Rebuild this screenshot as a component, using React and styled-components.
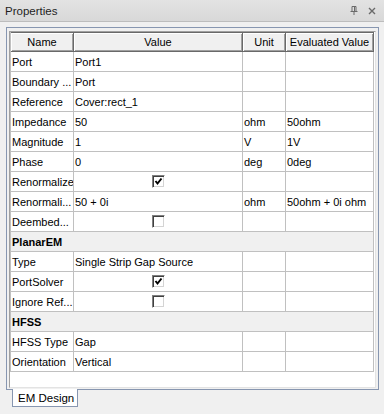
import React from "react";
import styled, { createGlobalStyle } from "styled-components";

const Global = createGlobalStyle`
  html, body { margin: 0; padding: 0; background: #f0f0f0; }
  body { font-family: "Liberation Sans", Arial, sans-serif; }
  * { box-sizing: border-box; }
`;

const Root = styled.div`
  width: 384px;
  height: 414px;
  background: #f0f0f0;
  display: flex;
  flex-direction: column;
  overflow: hidden;
`;

const TitleBar = styled.div`
  height: 22px;
  display: flex;
  align-items: center;
  padding: 0 8px 0 5px;
  background: linear-gradient(#e3e3e3, #d8d8d8);
  border-bottom: 1px solid #bdbdbd;
`;

const Title = styled.div`
  flex: 1;
  font-size: 11.5px;
  color: #1e1e1e;
`;

const TitleButtons = styled.div`
  display: flex;
  align-items: center;
  gap: 10px;
`;

const Body = styled.div`
  padding: 5px 5px 0 6px;
`;

const Frame = styled.div`
  border: 1px solid #8796b0;
  padding: 3px 2px 1px 2px;
  background: #f0f0f0;
`;

const Panel = styled.div`
  height: 357px;
  background: #fff;
  border-left: 1px solid #a0a0a0;
  border-top: 1px solid #a0a0a0;
  border-right: 1px solid #e3e3e3;
  border-bottom: 1px solid #e3e3e3;
`;

const Grid = styled.div`
  width: 364px;
  display: grid;
  grid-template-columns: 63px 169px 43px 88px;
  grid-auto-rows: 20px;
  border-left: 1px solid #c0c0c0;
  font-size: 11px;
  color: #000;
`;

const HeaderCell = styled.div`
  background: #f0f0f0;
  border-top: 1px solid #696969;
  border-right: 1px solid #696969;
  border-bottom: 1px solid #696969;
  box-shadow: inset 1px 1px #fff, inset -1px -1px #a0a0a0;
  display: flex;
  align-items: center;
  justify-content: center;
  white-space: nowrap;
`;

const Cell = styled.div`
  border-right: 1px solid #c0c0c0;
  border-bottom: 1px solid #c0c0c0;
  display: flex;
  align-items: center;
  justify-content: ${(p) => (p.$center ? "center" : "flex-start")};
  padding-left: ${(p) => (p.$center ? "0" : "1px")};
  white-space: nowrap;
  overflow: hidden;
`;

const GroupCell = styled.div`
  grid-column: 1 / -1;
  background: #f0f0f0;
  border-right: 1px solid #c0c0c0;
  border-bottom: 1px solid #c0c0c0;
  display: flex;
  align-items: center;
  padding-left: 1px;
  font-weight: bold;
`;

const Box = styled.div`
  width: 13px;
  height: 13px;
  background: #fff;
  border: 1px solid;
  border-color: #808080 #fff #fff #808080;
  box-shadow: inset 1px 1px #404040, inset -1px -1px #d4d4d4;
  display: flex;
  align-items: center;
  justify-content: center;
`;

const TabStrip = styled.div`
  display: flex;
  padding-left: 6px;
`;

const Tab = styled.div`
  margin-top: -1px;
  width: 66px;
  height: 18px;
  background: #fff;
  border: 1px solid #8796b0;
  border-top: none;
  font-size: 11.5px;
  color: #000;
  display: flex;
  align-items: center;
  padding-left: 5px;
`;

const Check = ({ checked }) => (
  <Box>
    {checked && (
      <svg width="9" height="9" viewBox="0 0 9 9">
        <path d="M1.5 4 L3.5 6.5 L7.5 1.5" fill="none" stroke="#000" strokeWidth="2" />
      </svg>
    )}
  </Box>
);

const rows = [
  { name: "Port", value: "Port1" },
  { name: "Boundary ...", value: "Port" },
  { name: "Reference", value: "Cover:rect_1" },
  { name: "Impedance", value: "50", unit: "ohm", ev: "50ohm" },
  { name: "Magnitude", value: "1", unit: "V", ev: "1V" },
  { name: "Phase", value: "0", unit: "deg", ev: "0deg" },
  { name: "Renormalize", check: true },
  { name: "Renormali...", value: "50 + 0i", unit: "ohm", ev: "50ohm + 0i ohm" },
  { name: "Deembed...", check: false },
  { group: "PlanarEM" },
  { name: "Type", value: "Single Strip Gap Source" },
  { name: "PortSolver", check: true },
  { name: "Ignore Ref...", check: false },
  { group: "HFSS" },
  { name: "HFSS Type", value: "Gap" },
  { name: "Orientation", value: "Vertical" },
];

export default function App() {
  return (
    <Root>
      <Global />
      <TitleBar>
        <Title>Properties</Title>
        <TitleButtons>
          <svg width="8" height="9" viewBox="0 0 8 9">
            <path d="M2 0.5 H6 V5 M2 0.5 V5 M0.5 5.5 H7.5 M4 5.5 V9" fill="none" stroke="#6a6a6a" strokeWidth="1" />
            <path d="M4.5 0.5 V5" stroke="#6a6a6a" strokeWidth="1" />
          </svg>
          <svg width="8" height="8" viewBox="0 0 8 8">
            <path d="M1 1 L7 7 M7 1 L1 7" stroke="#6a6a6a" strokeWidth="1.4" />
          </svg>
        </TitleButtons>
      </TitleBar>
      <Body>
        <Frame>
          <Panel>
            <Grid>
              <HeaderCell>Name</HeaderCell>
              <HeaderCell>Value</HeaderCell>
              <HeaderCell>Unit</HeaderCell>
              <HeaderCell>Evaluated Value</HeaderCell>
              {rows.map((r, i) =>
                r.group ? (
                  <GroupCell key={i}>{r.group}</GroupCell>
                ) : (
                  <React.Fragment key={i}>
                    <Cell>{r.name}</Cell>
                    {r.check !== undefined ? (
                      <Cell $center>
                        <Check checked={r.check} />
                      </Cell>
                    ) : (
                      <Cell>{r.value}</Cell>
                    )}
                    <Cell>{r.unit}</Cell>
                    <Cell>{r.ev}</Cell>
                  </React.Fragment>
                )
              )}
            </Grid>
          </Panel>
        </Frame>
        <TabStrip>
          <Tab>EM Design</Tab>
        </TabStrip>
      </Body>
    </Root>
  );
}
